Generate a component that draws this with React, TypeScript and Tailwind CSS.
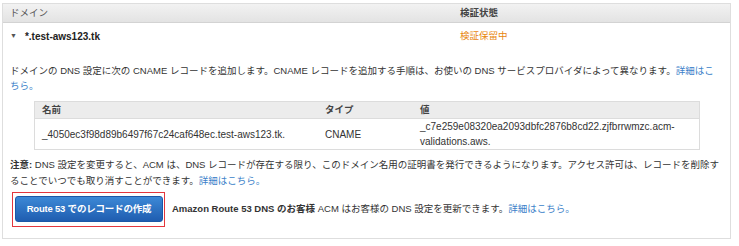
import React from "react";

const Link: React.FC<{ children: React.ReactNode }> = ({ children }) => (
  <a className="text-[#3b7fc9] cursor-pointer">{children}</a>
);

const App: React.FC = () => {
  return (
    <div
      className="w-[739px] h-[246px] bg-white text-[9.5px] text-[#333] pt-[3px] pl-[2px]"
      style={{ fontFamily: '"Liberation Sans", "Noto Sans CJK JP", sans-serif' }}
    >
      <div className="w-[729px] h-[236px] border border-[#dedede]">
        {/* header */}
        <div className="flex h-[19px] items-center bg-gradient-to-b from-[#f2f2f2] to-[#e3e3e3] border-b border-[#d3d3d3] text-[#555]">
          <div className="w-[457px] pl-[7px]">ドメイン</div>
          <div className="font-bold text-[#444]">検証状態</div>
        </div>
        {/* domain row */}
        <div className="flex h-[26px] items-center">
          <div className="w-[457px] pl-[7px] flex items-center font-bold text-[10px] text-[#222]">
            <span className="text-[7px] text-[#555] mr-[8px]">▼</span>
            *.test-aws123.tk
          </div>
          <div className="text-[#e8860e]">検証保留中</div>
        </div>
        <div className="pl-[7px] pr-[2px] pt-[14px]">
          <p className="leading-[15px] whitespace-nowrap">
            ドメインの DNS 設定に次の CNAME レコードを追加します。CNAME
            レコードを追加する手順は、お使いの DNS サービスプロバイダによって異なります。
            <Link>
              詳細はこ
              <br />
              ちら。
            </Link>
          </p>
          {/* record table */}
          <div className="ml-[24px] w-[666px] mt-[8px] border border-[#dcdcdc] text-[10px]">
            <div className="flex h-[17px] items-center bg-[#ececec] border-b border-[#dcdcdc] font-bold text-[#444] text-[9.5px]">
              <div className="w-[290px] pl-[7px]">名前</div>
              <div className="w-[95px]">タイプ</div>
              <div>値</div>
            </div>
            <div className="flex items-center h-[30px] leading-[15px]">
              <div className="w-[290px] pl-[7px]">_4050ec3f98d89b6497f67c24caf648ec.test-aws123.tk.</div>
              <div className="w-[95px]">CNAME</div>
              <div className="whitespace-nowrap">
                _c7e259e08320ea2093dbfc2876b8cd22.zjfbrrwmzc.acm-
                <br />
                validations.aws.
              </div>
            </div>
          </div>
          <p className="mt-[7px] leading-[16px] whitespace-nowrap">
            <span className="font-bold">注意:</span> DNS 設定を変更すると、ACM は、DNS
            レコードが存在する限り、このドメイン名用の証明書を発行できるようになります。アクセス許可は、レコードを削除す
            <br />
            ることでいつでも取り消すことができます。<Link>詳細はこちら。</Link>
          </p>
          <div className="flex items-center mt-[3px]">
            <div className="ml-[2px] border border-[#e3363d] pt-[3px] pb-[4px] pl-[2px] pr-[1px]">
              <button className="w-[148px] h-[26px] rounded-[3px] bg-gradient-to-b from-[#3d89d6] to-[#1f5db0] border border-[#1c58a6] text-white font-bold text-[9.5px] tracking-[-0.2px]">
                Route 53 でのレコードの作成
              </button>
            </div>
            <div className="ml-[7px] whitespace-nowrap">
              <span className="font-bold">Amazon Route 53 DNS のお客様</span> ACM
              はお客様の DNS 設定を更新できます。<Link>詳細はこちら。</Link>
            </div>
          </div>
        </div>
      </div>
    </div>
  );
};

export default App;
